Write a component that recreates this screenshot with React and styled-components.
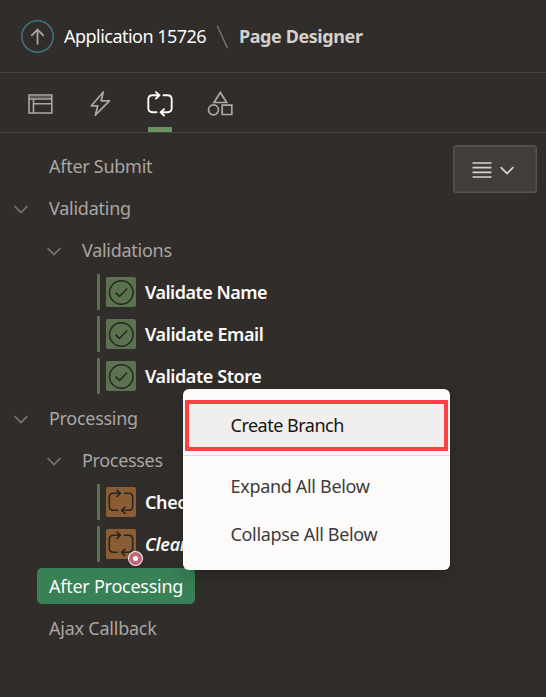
import React from "react";
import styled, { createGlobalStyle, css } from "styled-components";

const GlobalStyle = createGlobalStyle`
  *, *::before, *::after { box-sizing: border-box; }
  body {
    margin: 0;
    background: #312d2a;
    font-family: "Noto Sans", "Open Sans", sans-serif;
    font-size: 18px;
    overflow: hidden;
  }
`;

const Page = styled.div`
  position: relative;
  width: 546px;
  height: 697px;
  background: #312d2a;
  overflow: hidden;
`;

const Header = styled.header`
  display: flex;
  align-items: center;
  height: 73px;
  padding-left: 21px;
  border-bottom: 1px solid #474340;
`;

const Crumb = styled.span`
  white-space: nowrap;
  line-height: 24px;
  color: ${(p) => (p.$current ? "#d3d0ce" : "#fcfbfa")};
  font-weight: ${(p) => (p.$current ? 700 : 400)};
  letter-spacing: ${(p) => p.$track}px;
`;

const UpIcon = styled.svg`
  margin-right: 10px;
  flex: none;
`;

const Slash = styled.svg`
  margin: 2px 11px 0 9px;
  flex: none;
`;

const CrumbSlot = styled.div`
  width: 143px;
`;

const Tabs = styled.nav`
  display: flex;
  height: 60px;
  padding-left: 10px;
  border-bottom: 1px solid #474340;
`;

const Tab = styled.div`
  width: 60px;
  height: 59px;
  display: flex;
  flex-direction: column;
  align-items: center;
  padding-top: 18px;
  color: ${(p) => (p.$active ? "#fcfbfa" : "#aca8a5")};
  &::after {
    content: "";
    width: 24px;
    height: 5px;
    margin-top: auto;
    background: ${(p) => (p.$active ? "#6b9362" : "transparent")};
  }
`;

const Body = styled.main`
  display: flex;
  justify-content: space-between;
  padding: 12px 9px 0 0;
`;

const Tree = styled.div`
  flex: 1;
`;

const Row = styled.div`
  display: flex;
  align-items: center;
  height: 42px;
  padding-left: ${(p) => p.$indent}px;
`;

const Chevron = styled.svg`
  flex: none;
  margin: 2px 21px 0 0;
  color: #77726f;
`;

const Label = styled.span`
  line-height: 36px;
  white-space: nowrap;
  color: #a9a6a4;
  letter-spacing: ${(p) => p.$track || 0}px;
  ${(p) =>
    p.$strong &&
    css`
      color: #fcfbfa;
      font-weight: 600;
    `}
  ${(p) =>
    p.$italic &&
    css`
      font-style: italic;
    `}
  ${(p) =>
    p.$selected &&
    css`
      color: #fcfbfa;
      width: 158px;
      padding-left: 12px;
      border-radius: 5px;
      background: #388055;
    `}
`;

const Marker = styled.div`
  width: 3px;
  height: 36px;
  margin-right: 6px;
  border-radius: 1px;
  background: #5a7250;
`;

const Tile = styled.div`
  position: relative;
  width: 30px;
  height: 30px;
  margin-right: 9px;
  display: flex;
  align-items: center;
  justify-content: center;
  border-radius: 2px;
  color: #282522;
  background: ${(p) => (p.$kind === "process" ? "#8b5d35" : "#5a7250")};
`;

const Badge = styled.span`
  position: absolute;
  left: 23px;
  top: 23px;
  width: 13px;
  height: 13px;
  border: 4px solid #bf667d;
  border-radius: 50%;
  background: #fff;
  box-shadow: 0 0 0 1px #f8f1f1;
`;

const MenuButton = styled.button`
  display: flex;
  align-items: center;
  justify-content: center;
  gap: 8px;
  width: 84px;
  height: 48px;
  padding: 2px 4px 0 0;
  border: 1px solid #57544d;
  box-shadow: inset 0 0 0 1px #4d4a44;
  border-radius: 3px;
  background: #413e39;
  color: #d6d4d1;
`;

const Menu = styled.div`
  position: absolute;
  left: 183px;
  top: 389px;
  width: 267px;
  height: 181px;
  padding: 12px 0;
  border-radius: 6px;
  background: #fcfbfa;
  box-shadow: 0 6px 18px rgba(0, 0, 0, 0.2);
`;

const MenuItem = styled.div`
  position: relative;
  height: 48px;
  padding-left: 47.5px;
  line-height: 48px;
  white-space: nowrap;
  letter-spacing: ${(p) => p.$track}px;
  color: ${(p) => (p.$active ? "#161513" : "#3e3b39")};
  background: ${(p) => (p.$active ? "#f0efee" : "transparent")};
`;

const Highlight = styled.span`
  position: absolute;
  inset: -1px 2px -2px;
  border: 4px solid #fc4144;
`;

const Separator = styled.div`
  height: 1px;
  margin: 6px 0;
  background: #dfdddb;
`;

const LoopIcon = ({ size = 26, stroke = 1.9 }) => (
  <svg width={size} height={size} viewBox="0 0 26 26" fill="none" stroke="currentColor" strokeWidth={stroke} strokeLinecap="round" strokeLinejoin="round">
    <path d="M9.500 21.300H5.500Q1.300 21.300 1.300 17.100V8.500Q1.300 4.300 5.500 4.300H12M9 1.100l3.400 3.200L9 7.500" />
    <path d="M16.500 4.300h4Q24.700 4.300 24.700 8.500v8.600q0 4.200-4.200 4.200H14M17 18.100l-3.400 3.200L17 24.500" />
  </svg>
);

const CheckIcon = () => (
  <svg width="26" height="26" viewBox="0 0 26 26" fill="none" stroke="currentColor" strokeWidth="1.5" strokeLinecap="round" strokeLinejoin="round">
    <circle cx="13.300" cy="13.500" r="11.800" />
    <path d="M8 14.100l3.500 3.300 7.200-7.400" />
  </svg>
);

const Arrow = () => (
  <Chevron width="14" height="9" viewBox="0 0 14 9" fill="none" stroke="currentColor" strokeWidth="1.8">
    <path d="M.6 1.200 7 7.600l6.400-6.400" />
  </Chevron>
);

const Item = ({ kind, label, italic, badge, track }) => (
  <Row $indent={97}>
    <Marker />
    <Tile $kind={kind}>
      {kind === "process" ? <LoopIcon stroke={1.6} /> : <CheckIcon />}
      {badge && <Badge />}
    </Tile>
    <Label $strong $italic={italic} $track={track}>{label}</Label>
  </Row>
);

export default function App() {
  return (
    <Page>
      <GlobalStyle />
      <Header>
        <UpIcon width="33" height="33" viewBox="0 0 33 33" fill="none">
          <circle cx="16.500" cy="16.500" r="15.700" stroke="#43717f" strokeWidth="1.500" />
          <path d="M16.500 24.500V9.700M10.300 15.800l6.200-6.200 6.200 6.200" stroke="#aaa6a3" strokeWidth="1.800" />
        </UpIcon>
        <CrumbSlot><Crumb $track={-0.53}>Application 15726</Crumb></CrumbSlot>
        <Slash width="12" height="24" viewBox="0 0 12 24" fill="none" stroke="#77726f" strokeWidth="1.500">
          <path d="M1.300.800 11.500 23.200" />
        </Slash>
        <Crumb $current $track={-0.42}>Page Designer</Crumb>
      </Header>
      <Tabs>
        <Tab>
          <svg width="26" height="26" viewBox="0 0 26 26" fill="none" stroke="currentColor" strokeWidth="1.600">
            <path d="M2 4h22.800v18H2zM2 8h22.800M6.500 8v14M6.500 12.800H24.800" />
            <path d="M2 6h22.800" strokeOpacity=".45" />
          </svg>
        </Tab>
        <Tab>
          <svg width="26" height="26" viewBox="0 0 26 26" fill="none" stroke="currentColor" strokeWidth="1.700" strokeLinejoin="round">
            <path d="M16.300 1 4.300 14.800h6.500L8.300 24.200 22.500 9.800h-8.300z" />
          </svg>
        </Tab>
        <Tab $active><LoopIcon /></Tab>
        <Tab>
          <svg width="26" height="26" viewBox="0 0 26 26" fill="none" stroke="currentColor" strokeWidth="1.700">
            <path d="M13.300 1.500 19.700 11.500H7zM15.200 14.200h9.600v9.300h-9.600z" />
            <circle cx="6.500" cy="18.800" r="5" />
          </svg>
        </Tab>
      </Tabs>
      <Body>
        <Tree>
          <Row $indent={49}><Label $track={-0.27}>After Submit</Label></Row>
          <Row $indent={14}><Arrow /><Label $track={-0.25}>Validating</Label></Row>
          <Row $indent={47}><Arrow /><Label $track={-0.27}>Validations</Label></Row>
          <Item kind="validation" label="Validate Name" track={-0.5} />
          <Item kind="validation" label="Validate Email" track={-0.4} />
          <Item kind="validation" label="Validate Store" track={-0.43} />
          <Row $indent={14}><Arrow /><Label $track={-0.3}>Processing</Label></Row>
          <Row $indent={47}><Arrow /><Label $track={-0.33}>Processes</Label></Row>
          <Item kind="process" label="Check" track={-0.4} />
          <Item kind="process" label="Clear" italic badge track={-0.3} />
          <Row $indent={37}><Label $selected $track={-0.25}>After Processing</Label></Row>
          <Row $indent={49}><Label $track={-0.23}>Ajax Callback</Label></Row>
        </Tree>
        <MenuButton>
          <svg width="20" height="18" viewBox="0 0 20 18" stroke="currentColor" strokeWidth="1.700">
            <path d="M.5 2h19M.5 6.600h19M.5 11.300h19M.5 16h19" />
          </svg>
          <svg width="14" height="9" viewBox="0 0 14 9" fill="none" stroke="currentColor" strokeWidth="1.800">
            <path d="M.6 1.200 7 7.600l6.400-6.400" />
          </svg>
        </MenuButton>
      </Body>
      <Menu>
        <MenuItem $active $track={-0.5}>Create Branch<Highlight /></MenuItem>
        <Separator />
        <MenuItem $track={-0.32}>Expand All Below</MenuItem>
        <MenuItem $track={-0.33}>Collapse All Below</MenuItem>
      </Menu>
    </Page>
  );
}
